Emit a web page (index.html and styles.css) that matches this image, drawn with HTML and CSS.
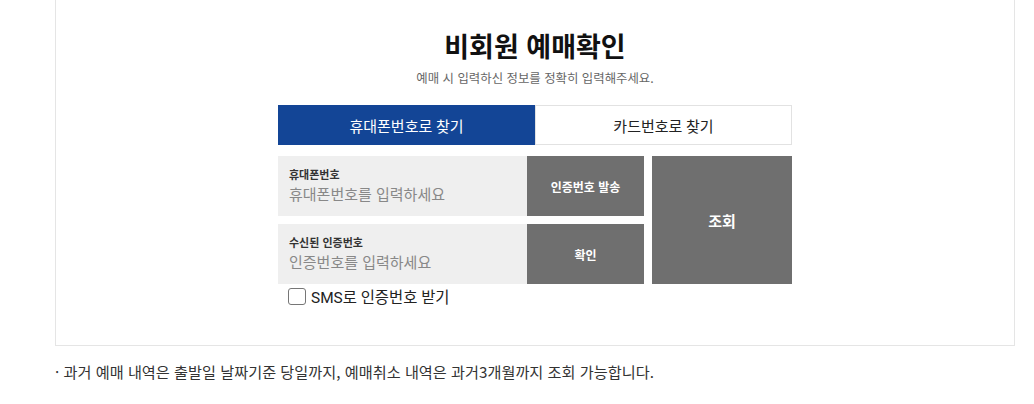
FILE: index.html
```html
<!DOCTYPE html>
<html lang="ko">
<head>
<meta charset="utf-8">
<link rel="stylesheet" href="styles.css">
</head>
<body>
<div class="page">
  <section class="box">
    <h1 class="title">비회원 예매확인</h1>
    <p class="subtitle">예매 시 입력하신 정보를 정확히 입력해주세요.</p>
    <div class="tabs">
      <button class="tab active">휴대폰번호로 찾기</button>
      <button class="tab">카드번호로 찾기</button>
    </div>
    <div class="form">
      <div class="rows">
        <div class="row">
          <div class="field">
            <span class="label">휴대폰번호</span>
            <span class="placeholder">휴대폰번호를 입력하세요</span>
          </div>
          <button class="btn">인증번호 발송</button>
        </div>
        <div class="row">
          <div class="field">
            <span class="label">수신된 인증번호</span>
            <span class="placeholder">인증번호를 입력하세요</span>
          </div>
          <button class="btn">확인</button>
        </div>
      </div>
      <button class="btn submit">조회</button>
    </div>
    <label class="check">
      <span class="checkbox"></span>
      <span class="check-text">SMS로 인증번호 받기</span>
    </label>
  </section>
  <p class="note">· 과거 예매 내역은 출발일 날짜기준 당일까지, 예매취소 내역은 과거3개월까지 조회 가능합니다.</p>
</div>
</body>
</html>
```

FILE: styles.css
```css
* { box-sizing: border-box; }
body {
  margin: 0;
  background: #fff;
  font-family: Roboto, "Noto Sans CJK KR", sans-serif;
  color: #222;
}
.page {
  margin-left: 55px;
  width: 960px;
}
.box {
  border: 1px solid #e5e5e5;
  border-top: 0;
  height: 346px;
  padding-top: 30px;
  display: flex;
  flex-direction: column;
  align-items: center;
}
.title {
  margin: 0;
  font-size: 27px;
  line-height: 31px;
  font-weight: 700;
  color: #111;
  font-family: "Noto Sans CJK KR", sans-serif;
}
.subtitle {
  margin: 9px 0 0;
  font-size: 12.4px;
  line-height: 16px;
  color: #666;
  font-family: "Noto Sans CJK KR", sans-serif;
}
.tabs {
  margin-top: 19px;
  width: 514px;
  display: flex;
}
.tab {
  flex: 1;
  height: 40px;
  border: 1px solid #e2e2e2;
  background: #fff;
  font-family: Roboto, "Noto Sans CJK KR", sans-serif;
  font-size: 15px;
  color: #222;
  padding: 0;
}
.tab.active {
  background: #134596;
  border-color: #134596;
  color: #fff;
}
.form {
  margin-top: 11px;
  width: 514px;
  display: flex;
  gap: 8px;
}
.rows {
  display: flex;
  flex-direction: column;
  gap: 8px;
  width: 366px;
}
.row {
  display: flex;
  height: 60px;
}
.field {
  flex: 1;
  background: #efefef;
  padding: 11px 11px 0;
  display: flex;
  flex-direction: column;
}
.label {
  font-family: "Noto Sans CJK KR", sans-serif;
  font-size: 11px;
  font-weight: 700;
  line-height: 14px;
  color: #333;
}
.placeholder {
  margin-top: 3px;
  font-family: "Noto Sans CJK KR", sans-serif;
  font-size: 15px;
  line-height: 20px;
  color: #888;
}
.btn {
  width: 117px;
  border: 0;
  background: #6f6f6f;
  color: #fff;
  font-family: "Noto Sans CJK KR", sans-serif;
  font-size: 12px;
  font-weight: 700;
  padding: 0;
}
.btn.submit {
  width: 140px;
  height: 128px;
  font-size: 15px;
}
.check {
  width: 514px;
  display: flex;
  align-items: center;
  height: 24px;
  padding-left: 10px;
  gap: 5px;
}
.checkbox {
  width: 18px;
  height: 17px;
  border: 1px solid #767676;
  border-radius: 3px;
  background: #fff;
}
.check-text {
  font-size: 15.4px;
  color: #222;
}
.note {
  margin: 15px 0 0;
  font-family: "Noto Sans CJK KR", sans-serif;
  font-size: 15.2px;
  line-height: 20px;
  color: #333;
}
```
